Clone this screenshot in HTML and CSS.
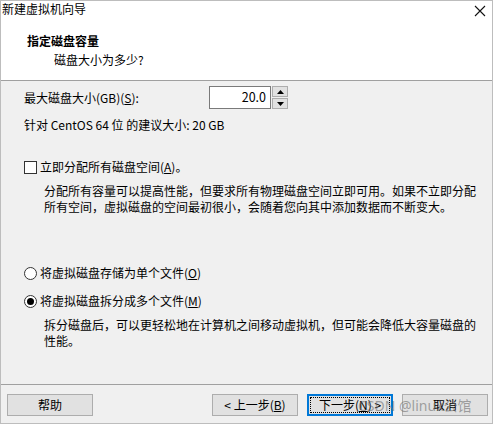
FILE: index.html
```html
<!DOCTYPE html>
<html lang="zh-CN">
<head>
<meta charset="utf-8">
<title>新建虚拟机向导</title>
<link rel="stylesheet" href="styles.css">
</head>
<body>
<div class="window">
  <div class="header">
    <div class="titlebar">
      <span class="title">新建虚拟机向导</span>
      <svg class="close" width="12" height="12" viewBox="0 0 12 12"><path d="M1 1L11 11M11 1L1 11" stroke="#111" stroke-width="1.1"/></svg>
    </div>
    <div class="heading">指定磁盘容量</div>
    <div class="subheading">磁盘大小为多少?</div>
  </div>
  <div class="content">
    <div class="size-row">
      <span class="label">最大磁盘大小(GB)(<u>S</u>):</span>
      <div class="spin">
        <div class="spin-input">20.0</div>
        <div class="spin-buttons">
          <div class="spin-btn"><svg width="7" height="4" viewBox="0 0 7 4"><path d="M3.5 0L7 4H0Z" fill="#000"/></svg></div>
          <div class="spin-btn"><svg width="7" height="4" viewBox="0 0 7 4"><path d="M0 0H7L3.5 4Z" fill="#000"/></svg></div>
        </div>
      </div>
    </div>
    <div class="recommend">针对 CentOS 64 位 的建议大小: 20 GB</div>

    <div class="option check-row">
      <span class="checkbox"></span>
      <span>立即分配所有磁盘空间(<u>A</u>)。</span>
    </div>
    <p class="desc">分配所有容量可以提高性能，但要求所有物理磁盘空间立即可用。如果不立即分配所有空间，虚拟磁盘的空间最初很小，会随着您向其中添加数据而不断变大。</p>

    <div class="option radio-row first-radio">
      <span class="radio"></span>
      <span>将虚拟磁盘存储为单个文件(<u>O</u>)</span>
    </div>
    <div class="option radio-row">
      <span class="radio checked"></span>
      <span>将虚拟磁盘拆分成多个文件(<u>M</u>)</span>
    </div>
    <p class="desc">拆分磁盘后，可以更轻松地在计算机之间移动虚拟机，但可能会降低大容量磁盘的性能。</p>
  </div>
  <div class="footer">
    <button class="btn">帮助</button>
    <div class="spacer"></div>
    <button class="btn">&lt; 上一步(<u>B</u>)</button>
    <button class="btn primary"><span class="focus">下一步(<u>N</u>) &gt;</span></button>
    <button class="btn">取消</button>
    <span class="watermark">CSDN @linux公馆</span>
  </div>
</div>
</body>
</html>
```

FILE: styles.css
```css
* { box-sizing: border-box; }
html, body {
  margin: 0;
  padding: 0;
  background: #f0f0f0;
}
body {
  width: 493px;
  height: 424px;
  font-family: "Noto Sans CJK SC", "Noto Sans", sans-serif;
  font-size: 12px;
  color: #000;
}
.window {
  width: 493px;
  height: 424px;
  border: 1px solid #bdbdbd;
  background: #f0f0f0;
  display: flex;
  flex-direction: column;
  position: relative;
}
.header {
  background: #fff;
  height: 80px;
  border-bottom: 1px solid #a0a0a0;
  flex: none;
}
.titlebar {
  height: 22px;
  display: flex;
  align-items: center;
  justify-content: space-between;
  padding: 0 6px 0 1px;
  line-height: 16px;
}
.title { font-size: 12px; margin-top: -6px; }
.close { margin-top: -2px; }
.heading {
  font-weight: bold;
  padding-left: 26px;
  margin-top: 10px;
  line-height: 16px;
}
.subheading {
  padding-left: 53px;
  margin-top: 3px;
  line-height: 16px;
}
.content {
  flex: 1;
  padding: 5px 0 0 23px;
  border-bottom: 1px solid #a0a0a0;
}
.size-row {
  display: flex;
  align-items: center;
  height: 23px;
}
.label { width: 185px; }
.spin { display: flex; height: 23px; }
.spin-input {
  width: 62px;
  height: 23px;
  background: #fff;
  border: 1px solid #7a7a7a;
  text-align: right;
  padding-right: 4px;
  line-height: 20px;
  font-size: 12.5px;
}
.spin-buttons {
  display: flex;
  flex-direction: column;
  margin-left: 1px;
  gap: 1px;
}
.spin-btn {
  width: 16px;
  height: 11px;
  background: #e1e1e1;
  border: 1px solid #adadad;
  display: flex;
  align-items: center;
  justify-content: center;
}
.recommend {
  margin-top: 8px;
  line-height: 16px;
}
.option {
  display: flex;
  align-items: center;
  line-height: 16px;
  gap: 3px;
}
.check-row { margin-top: 26px; }
.checkbox {
  width: 13px;
  height: 13px;
  border: 1px solid #333;
  background: #fff;
  flex: none;
}
.radio {
  width: 13px;
  height: 13px;
  border: 1px solid #333;
  border-radius: 50%;
  background: #fff;
  flex: none;
  display: flex;
  align-items: center;
  justify-content: center;
}
.radio.checked::after {
  content: "";
  width: 7px;
  height: 7px;
  border-radius: 50%;
  background: #000;
}
.desc {
  margin: 8px 0 0 20px;
  width: 440px;
  line-height: 16px;
}
.first-radio { margin-top: 50px; }
.radio-row + .radio-row { margin-top: 12px; }
.footer {
  height: 38px;
  flex: none;
  display: flex;
  align-items: flex-start;
  padding: 9px 4px 0 6px;
  gap: 9px;
  position: relative;
}
.spacer { flex: 1; }
.btn {
  width: 86px;
  height: 22px;
  background: #e1e1e1;
  border: 1px solid #adadad;
  font-family: inherit;
  font-size: 12px;
  color: #000;
  padding: 0;
  line-height: 18px;
}
.btn.primary {
  border: 2px solid #0078d7;
  padding: 1px;
}
.focus {
  display: block;
  height: 16px;
  border: 1px dotted #000;
  line-height: 14px;
}
.watermark {
  position: absolute;
  z-index: 2;
  left: 357px;
  top: 10px;
  font-size: 14px;
  color: rgba(110, 110, 110, 0.6);
  pointer-events: none;
  white-space: nowrap;
  font-family: "Noto Sans", "Noto Sans CJK SC", sans-serif;
}
```
